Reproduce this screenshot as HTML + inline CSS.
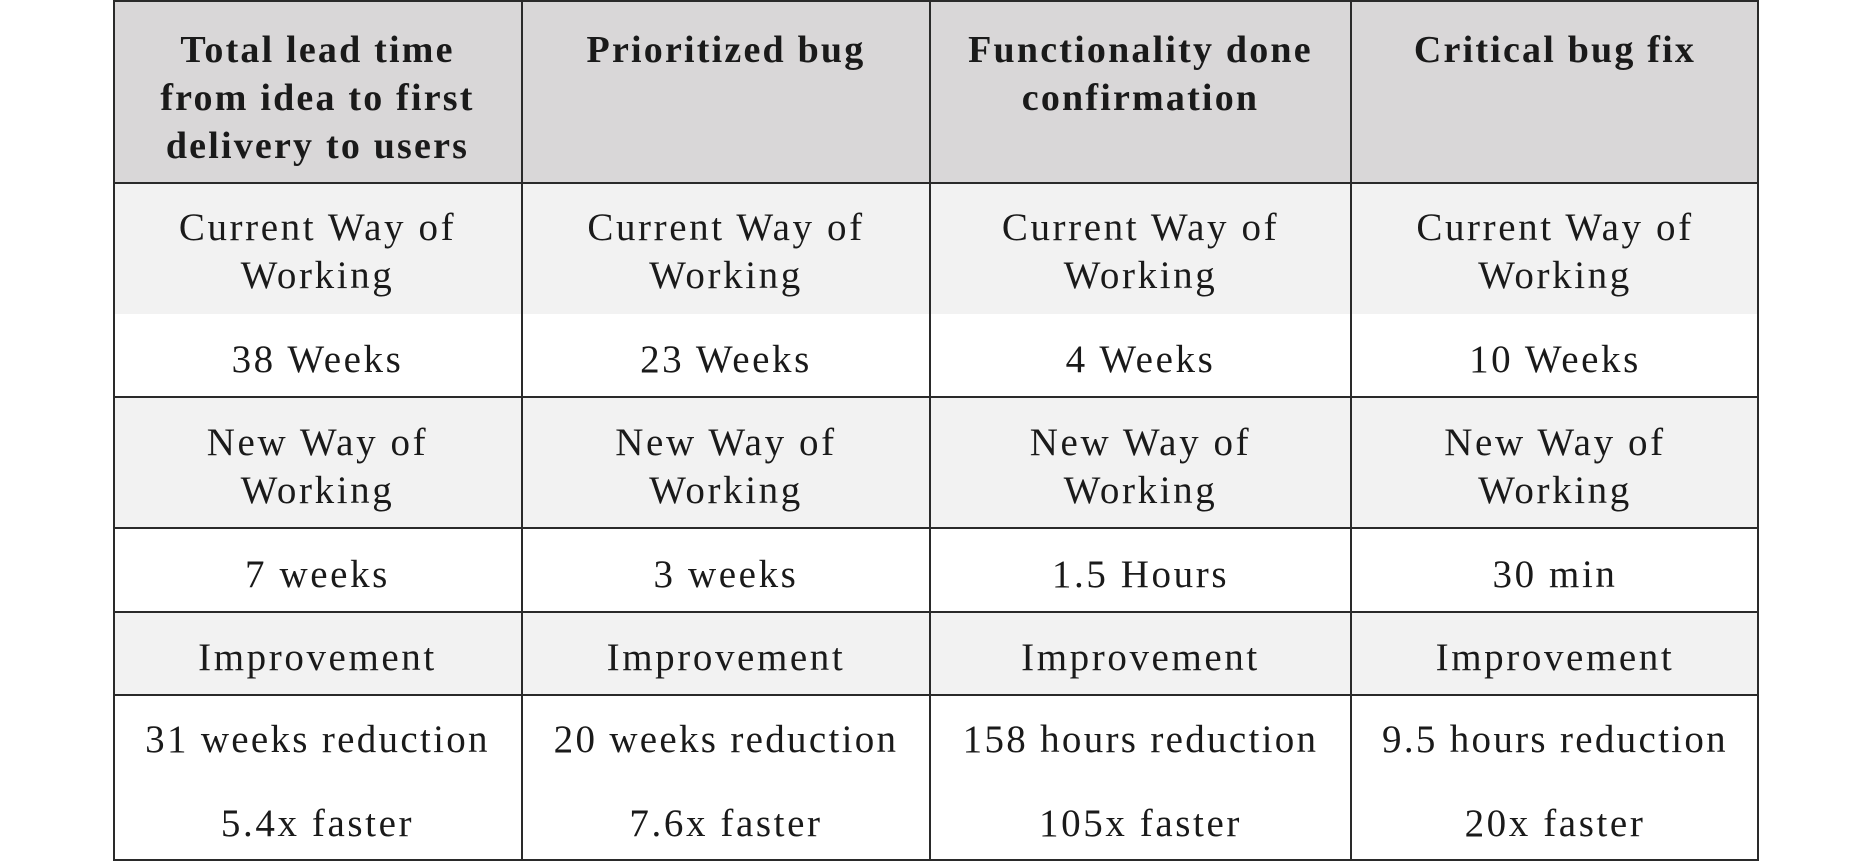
<!DOCTYPE html>
<html><head><meta charset="utf-8"><style>
html,body{margin:0;padding:0;background:#fff;width:1872px;height:862px;overflow:hidden}
.t{position:absolute;left:113px;top:0;width:1646px;height:861px;border:2px solid #2a2a2a;box-sizing:border-box}
.bg{position:absolute;left:113px;width:1646px}
.h{position:absolute;height:2px;left:113px;width:1646px;background:#2a2a2a}
.v{position:absolute;width:2px;top:0;height:861px;background:#2a2a2a}
.c{position:absolute;text-align:center;font-family:"Liberation Serif",serif;font-size:39px;line-height:48px;color:#1a1a1a;letter-spacing:2.6px;white-space:nowrap}
.b{font-weight:bold;font-size:38px;letter-spacing:2.2px}
.r{letter-spacing:2.3px}
</style></head><body>
<div class="bg" style="top:0;height:183px;background:#d9d7d8"></div>
<div class="bg" style="top:183px;height:131px;background:#f2f2f2"></div>
<div class="bg" style="top:396px;height:132px;background:#f2f2f2"></div>
<div class="bg" style="top:611px;height:84px;background:#f2f2f2"></div>
<div class="t"></div>
<div class="h" style="top:182px"></div>
<div class="h" style="top:396px"></div>
<div class="h" style="top:527px"></div>
<div class="h" style="top:611px"></div>
<div class="h" style="top:694px"></div>
<div class="v" style="left:521px"></div>
<div class="v" style="left:929px"></div>
<div class="v" style="left:1350px"></div>

<div class="c b" style="left:113px;width:409px;top:26px">Total lead time<br>from idea to first<br>delivery to users</div>
<div class="c b" style="left:522px;width:408px;top:26px">Prioritized bug</div>
<div class="c b" style="left:930px;width:421px;top:26px">Functionality done<br>confirmation</div>
<div class="c b" style="left:1351px;width:408px;top:26px">Critical bug fix</div>

<div class="c" style="left:113px;width:409px;top:204px">Current Way of<br>Working</div>
<div class="c" style="left:522px;width:408px;top:204px">Current Way of<br>Working</div>
<div class="c" style="left:930px;width:421px;top:204px">Current Way of<br>Working</div>
<div class="c" style="left:1351px;width:408px;top:204px">Current Way of<br>Working</div>

<div class="c" style="left:113px;width:409px;top:336px">38 Weeks</div>
<div class="c" style="left:522px;width:408px;top:336px">23 Weeks</div>
<div class="c" style="left:930px;width:421px;top:336px">4 Weeks</div>
<div class="c" style="left:1351px;width:408px;top:336px">10 Weeks</div>

<div class="c" style="left:113px;width:409px;top:419px">New Way of<br>Working</div>
<div class="c" style="left:522px;width:408px;top:419px">New Way of<br>Working</div>
<div class="c" style="left:930px;width:421px;top:419px">New Way of<br>Working</div>
<div class="c" style="left:1351px;width:408px;top:419px">New Way of<br>Working</div>

<div class="c" style="left:113px;width:409px;top:551px">7 weeks</div>
<div class="c" style="left:522px;width:408px;top:551px">3 weeks</div>
<div class="c" style="left:930px;width:421px;top:551px">1.5 Hours</div>
<div class="c" style="left:1351px;width:408px;top:551px">30 min</div>

<div class="c" style="left:113px;width:409px;top:634px">Improvement</div>
<div class="c" style="left:522px;width:408px;top:634px">Improvement</div>
<div class="c" style="left:930px;width:421px;top:634px">Improvement</div>
<div class="c" style="left:1351px;width:408px;top:634px">Improvement</div>

<div class="c r" style="left:113px;width:409px;top:716px">31 weeks reduction</div>
<div class="c r" style="left:522px;width:408px;top:716px">20 weeks reduction</div>
<div class="c r" style="left:930px;width:421px;top:716px">158 hours reduction</div>
<div class="c r" style="left:1351px;width:408px;top:716px">9.5 hours reduction</div>

<div class="c" style="left:113px;width:409px;top:800px">5.4x faster</div>
<div class="c" style="left:522px;width:408px;top:800px">7.6x faster</div>
<div class="c" style="left:930px;width:421px;top:800px">105x faster</div>
<div class="c" style="left:1351px;width:408px;top:800px">20x faster</div>
</body></html>
